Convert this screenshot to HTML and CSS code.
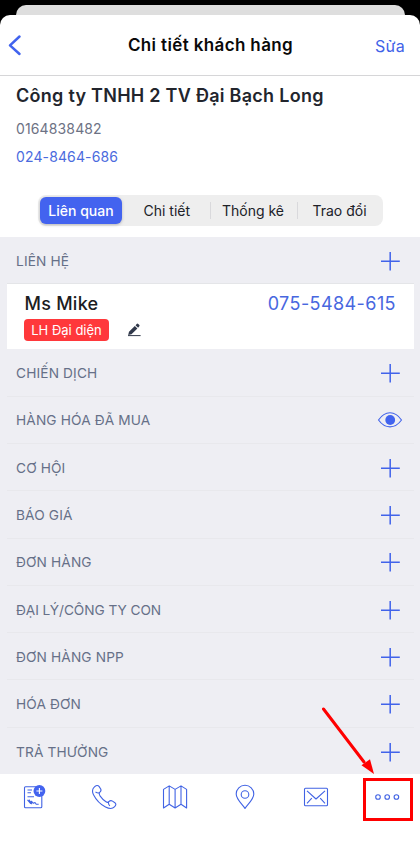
FILE: index.html
```html
<!DOCTYPE html>
<html lang="vi">
<head>
<meta charset="utf-8">
<title>Chi tiết khách hàng</title>
<link rel="stylesheet" href="styles.css">
</head>
<body>
<svg width="0" height="0" class="defs">
  <symbol id="plus" viewBox="0 0 20 20"><path d="M10.2 1V19.5M1 10.3H19.8"/></symbol>
</svg>
<div class="screen">
  <div class="back-sheet"></div>
  <main class="sheet">
    <header class="nav">
      <svg class="chevron" viewBox="0 0 14 22"><path d="M11.5 2.5L2 11.3L11.5 20"/></svg>
      <h1 class="title">Chi tiết khách hàng</h1>
      <a class="edit">Sửa</a>
    </header>
    <section class="customer">
      <h2 class="name">Công ty TNHH 2 TV Đại Bạch Long</h2>
      <p class="code">0164838482</p>
      <p class="tel">024-8464-686</p>
      <div class="segments">
        <span class="segment active">Liên quan</span>
        <span class="segment">Chi tiết</span>
        <span class="segment divided">Thống kê</span>
        <span class="segment divided">Trao đổi</span>
      </div>
    </section>
    <section class="list">
      <div class="row first"><span>LIÊN HỆ</span><svg class="plus"><use href="#plus"/></svg></div>
      <div class="contact">
        <div class="contact-top"><span class="contact-name">Ms Mike</span><span class="contact-tel">075-5484-615</span></div>
        <div class="contact-bottom">
          <span class="tag">LH Đại diện</span>
          <svg class="pencil" viewBox="0 0 14 14"><path d="M1.2 12.1L2 8.7L7.8 3L10.4 5.5L4.5 11.3ZM8.5 2.2L10 .8Q10.6.4 11.2.9L12.4 2.1Q12.8 2.7 12.3 3.3L11.1 4.8Z"/><path d="M1 12.1H13.6V13.1H1Z"/></svg>
        </div>
      </div>
      <div class="row"><span>CHIẾN DỊCH</span><svg class="plus"><use href="#plus"/></svg></div>
      <div class="row"><span>HÀNG HÓA ĐÃ MUA</span><svg class="eye" viewBox="0 0 26 18"><path d="M1.5 9C8 -.7 18 -.7 24.5 9C18 18.1 8 18.1 1.5 9Z"/><circle cx="13.2" cy="9" r="4.9"/></svg></div>
      <div class="row"><span>CƠ HỘI</span><svg class="plus"><use href="#plus"/></svg></div>
      <div class="row"><span>BÁO GIÁ</span><svg class="plus"><use href="#plus"/></svg></div>
      <div class="row"><span>ĐƠN HÀNG</span><svg class="plus"><use href="#plus"/></svg></div>
      <div class="row"><span class="tight">ĐẠI LÝ/CÔNG TY CON</span><svg class="plus"><use href="#plus"/></svg></div>
      <div class="row"><span>ĐƠN HÀNG NPP</span><svg class="plus"><use href="#plus"/></svg></div>
      <div class="row"><span>HÓA ĐƠN</span><svg class="plus"><use href="#plus"/></svg></div>
      <div class="row"><span>TRẢ THƯỞNG</span><svg class="plus"><use href="#plus"/></svg></div>
    </section>
    <footer class="toolbar">
      <svg viewBox="0 0 26 26"><rect x="3.5" y="2.8" width="17.3" height="21" rx="1"/><path d="M6.5 6H11M6.5 8.7H10M6.5 12.8H13M6.5 15.8L9.5 19.5L8.2 16L10.7 19.8L10.3 17.2L12.5 19.3L14 18.5L15.2 20.2H17.7"/><circle class="solid" cx="18.4" cy="7" r="5.9"/><path class="light" d="M15.4 7H21.4M18.4 4V10"/></svg>
      <svg viewBox="0 0 26 26"><path d="M3.2 3.2C5 1.2 6.8.8 8.2 2.6L9.8 5.2C10.4 6.4 9.9 7.4 8.7 8.4C7.7 9.5 8.2 10.6 9.2 12.1C10.8 14.4 12.5 16.1 15 17.8C16.2 18.7 17 18.6 17.8 17.7C19 16.4 20.2 16.2 21.5 17.1L23.9 18.8C25.4 19.9 25 21.4 23.4 22.9C21.3 25.2 18.2 24.9 14.5 23C9.2 20.2 5.1 15.8 2.5 10.7C.8 7.2 1.3 5 3.2 3.2ZM4.5 8C6.5 9.2 8 9.2 8.7 8.4C10 7.2 10.4 6.2 9.6 4.9M17.8 17.7C17.2 18.8 17.5 20.5 18.8 22"/></svg>
      <svg viewBox="0 0 26 26"><path d="M1.5 5.4L7.2 1.9L13.1 5.4L19 1.9L24.6 5.4V24L19 20.3L13.1 24L7.2 20.3L1.5 24ZM7.2 1.9V20.3M13.1 5.4V24M19 1.9V20.3"/></svg>
      <svg viewBox="0 0 26 26"><path d="M13 24.5C11 20.8 4.2 15.6 4.2 10A8.8 8.8 0 0 1 21.8 10C21.8 15.6 15 20.8 13 24.5Z"/><circle cx="13" cy="10.5" r="3.8"/></svg>
      <svg viewBox="0 0 26 26"><rect x="1.5" y="4.2" width="23" height="17.5" rx="1"/><path d="M4 6.8L13 15L22 6.8M4 19.3L8.8 14.2M22 19.3L17.2 14.2"/></svg>
      <div class="more">
        <svg viewBox="0 0 26 26"><circle cx="4" cy="13" r="2.3"/><circle cx="13.2" cy="13" r="2.3"/><circle cx="22.4" cy="13" r="2.3"/></svg>
        <svg class="arrow" viewBox="0 0 60 74"><path d="M8.5 7L49 60"/><path class="head" d="M59 72L46.5 63.2L55 57.3Z"/></svg>
      </div>
    </footer>
  </main>
</div>
</body>
</html>
```
FILE: styles.css
```css
* { box-sizing: border-box; }
body { margin: 0; background: #000; font-family: Inter, "Noto Sans", sans-serif; }
h1, h2, p { margin: 0; }
svg { display: block; flex: none; }
.defs { position: absolute; }
.screen { height: 841px; padding-top: 4.5px; overflow: hidden; }
.back-sheet { height: 10.5px; margin: 0 15px 0 16px; background: #dedede; border-radius: 10px 10px 0 0; }
.sheet { height: 826px; background: #fff; border-radius: 10px 10px 0 0; }

.nav { height: 61px; display: grid; grid-template-columns: 90px 1fr 90px; align-items: center; border-bottom: 1px solid #d6d6d8; }
.chevron { width: 14px; height: 22px; margin-left: 8px; fill: none; stroke: #4163ee; stroke-width: 2.5; stroke-linecap: round; stroke-linejoin: round; }
.title { text-align: center; padding-left: 1px; font-size: 17px; font-weight: 600; line-height: 24px; letter-spacing: .37px; white-space: nowrap; color: #090909; }
.edit { justify-self: end; margin-right: 15px; padding-top: 1px; font-size: 16px; letter-spacing: .3px; color: #4163e8; }

.customer { height: 161px; padding: 7px 16px 0; }
.name { font-size: 18px; line-height: 26px; font-weight: 600; letter-spacing: .27px; white-space: nowrap; color: #22252d; }
.code, .tel { font-size: 14px; line-height: 20px; letter-spacing: .13px; }
.code { margin-top: 10px; color: #6d7284; }
.tel { margin-top: 8px; color: #4b6bde; }
.segments { display: grid; grid-template-columns: 84px 85.5px 87px 86px; width: 345px; height: 31px; margin: 28px 0 0 22px; padding: 2px; background: #eee; border-radius: 8px; }
.segment { display: flex; align-items: center; justify-content: center; position: relative; font-size: 14px; color: #202128; white-space: nowrap; }
.active { width: 82px; background: #4363ef; color: #fff; border-radius: 6px; box-shadow: 0 1px 3px #8888; font-weight: 500; }
.divided::before { content: ""; position: absolute; left: 0; top: 5px; width: 1px; height: 17px; background: #d9d9dc; }

.list { height: 537px; background: #eeeef3; padding: 0 6px 0 7px; overflow: hidden; }
.row { height: 47.3px; display: flex; align-items: center; justify-content: space-between; padding: 1px 14px 0 9px; font-size: 13.7px; letter-spacing: .14px; color: #667088; border-bottom: 1px solid #e8e8ec; }
.row:last-child { border: 0; }
.tight { letter-spacing: -.06px; }
.first { height: 47px; border-color: #e4e5e8; }
.plus { width: 20px; height: 20px; fill: none; stroke: #4163ea; stroke-width: 1.5; }
.eye { width: 26px; height: 18px; margin-right: -3px; fill: none; stroke: #4163ea; stroke-width: 1.1; }
.eye circle { fill: #4163ee; stroke: none; }
.contact { height: 65.4px; background: #fff; padding: 7px 18px 0 17px; }
.contact-top { display: flex; justify-content: space-between; font-size: 18px; line-height: 26px; color: #1c1d21; }
.contact-name { padding-left: .5px; letter-spacing: .25px; font-weight: 500; }
.contact-tel { color: #4867df; letter-spacing: .42px; }
.contact-bottom { display: flex; align-items: center; margin-top: 2px; }
.tag { width: 85px; height: 22px; line-height: 22px; text-align: center; font-size: 13px; color: #fff; background: #ff383b; border-radius: 4px; white-space: nowrap; }
.pencil { width: 14px; height: 14px; margin-left: 18px; fill: #30384a; }

.toolbar { height: 67px; display: grid; grid-template-columns: repeat(6, 70.6px); justify-items: center; margin-left: -1.6px; padding-top: 10px; }
.toolbar svg { width: 26px; height: 26px; fill: none; stroke: #4163e4; stroke-width: 1.1; stroke-linejoin: round; }
.toolbar .solid { fill: #4363ef; stroke: none; }
.toolbar .light { stroke: #fff; }
.more { position: relative; left: 1.3px; width: 50px; height: 43px; margin-top: -6px; padding: 3px 0 0 8.5px; border: 3px solid #f00; }
.toolbar .arrow { position: absolute; left: -51px; top: -79px; width: 60px; height: 74px; stroke: #f00; stroke-width: 3; stroke-linecap: round; }
.toolbar .arrow .head { fill: #f00; stroke: none; }
```
